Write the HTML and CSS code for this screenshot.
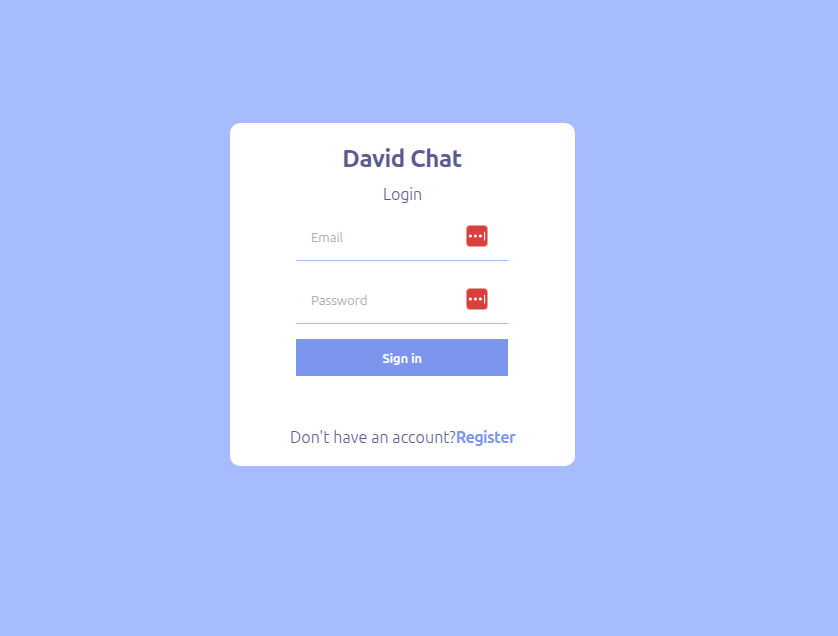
FILE: index.html
```html
<!DOCTYPE html>
<html lang="en">
<head>
<meta charset="utf-8">
<title>David Chat</title>
<link rel="stylesheet" href="styles.css">
</head>
<body>
<main class="card">
  <h1 class="logo">David Chat</h1>
  <p class="title">Login</p>
  <form class="form">
    <div class="field">
      <input type="email" placeholder="Email">
      <svg class="key" viewBox="0 0 22 22"><rect x=".5" y=".5" width="21" height="21" rx="3.5" fill="#d93f3b" stroke="#e7a09e" stroke-width=".7"/><g fill="#fff"><circle cx="4.4" cy="11" r="1.6"/><circle cx="9.4" cy="11" r="1.6"/><circle cx="14.4" cy="11" r="1.6"/><rect x="18" y="6.7" width="1.1" height="8.8" rx=".3"/></g></svg>
    </div>
    <div class="field">
      <input type="password" placeholder="Password">
      <svg class="key" viewBox="0 0 22 22"><rect x=".5" y=".5" width="21" height="21" rx="3.5" fill="#d93f3b" stroke="#e7a09e" stroke-width=".7"/><g fill="#fff"><circle cx="4.4" cy="11" r="1.6"/><circle cx="9.4" cy="11" r="1.6"/><circle cx="14.4" cy="11" r="1.6"/><rect x="18" y="6.7" width="1.1" height="8.8" rx=".3"/></g></svg>
    </div>
    <button type="button">Sign in</button>
  </form>
  <p class="footer"><span class="question">Don't have an account?</span><a>Register</a></p>
</main>
</body>
</html>
```
FILE: styles.css
```css
* { box-sizing: border-box; }
body {
  margin: 0;
  height: 636px;
  padding: 123px 0 0 230px;
  background: #a7bcff;
  font-family: Ubuntu, "Open Sans", "Noto Sans", sans-serif;
  color: #5d5b8d;
}
.card {
  width: 345px;
  height: 343px;
  padding: 21px 21px 0 20px;
  border-radius: 10px;
  background: #fff;
  display: flex;
  flex-direction: column;
  align-items: center;
}
.logo {
  margin: 0;
  font-size: 24px;
  line-height: 30px;
  font-weight: 600;
  letter-spacing: -0.3px;
  white-space: nowrap;
}
.title {
  margin: 10px 0 0 1px;
  font-size: 16px;
  line-height: 20px;
  font-weight: 300;
}
.form {
  width: 212px;
  margin: 9px 0 0;
  display: flex;
  flex-direction: column;
  gap: 15px;
}
.field { position: relative; height: 48px; }
.field input {
  display: block;
  width: 100%;
  height: 48px;
  padding: 16px 15px 14px;
  border: 0;
  border-bottom: 1px solid #a7bcff;
  background: transparent;
  font: 300 13.3px/17px Ubuntu, "Open Sans", "Noto Sans", sans-serif;
}
.field input::placeholder { color: #a0a0a0; opacity: 1; }
.key { position: absolute; right: 20px; top: 12px; width: 22px; height: 22px; }
button {
  height: 37px;
  border: 0;
  padding: 1px 0 0;
  background: #7b96ec;
  color: #fff;
  font: 700 13.3px/17px Ubuntu, "Open Sans", "Noto Sans", sans-serif;
  letter-spacing: -0.25px;
}
.footer {
  display: flex;
  margin: 51px 0 0 1px;
  font-size: 16px;
  line-height: 20px;
  font-weight: 300;
  white-space: nowrap;
}
.question { letter-spacing: 0.13px; }
.footer a { color: #7b96ec; font-weight: 600; letter-spacing: -0.5px; }
```
